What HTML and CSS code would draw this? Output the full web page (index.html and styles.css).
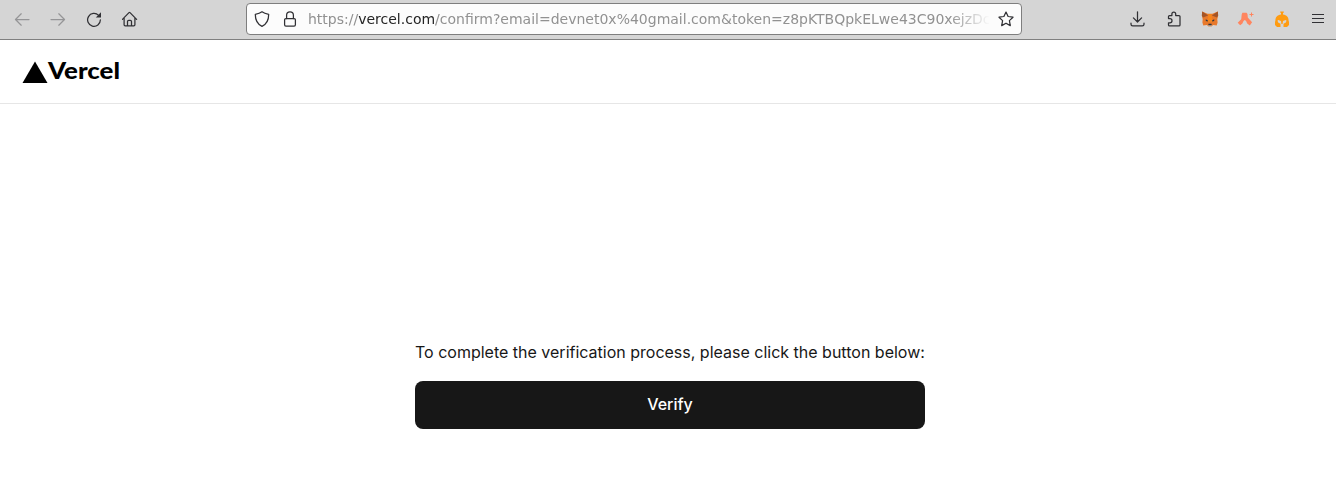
FILE: index.html
```html
<!DOCTYPE html>
<html lang="en">
<head>
<meta charset="utf-8">
<title>Verify – Vercel</title>
<link rel="stylesheet" href="styles.css">
</head>
<body>
<div class="toolbar">
  <nav class="tools">
    <span class="tool disabled"><svg class="icon" viewBox="0 0 16 16"><path d="M15 8.500H1.600M7.200 2.800L1.500 8.500l5.700 5.700"/></svg></span>
    <span class="tool disabled"><svg class="icon" viewBox="0 0 16 16"><path d="M1 8.500h13.400M8.800 2.800l5.700 5.700-5.700 5.700"/></svg></span>
    <span class="tool"><svg class="icon" viewBox="0 0 16 16"><path d="M12.600 4.400A6.400 6.400 0 1 0 14.400 8.800"/><path class="solid" d="M15 1.200v5.200H9.800z"/></svg></span>
    <span class="tool"><svg class="icon" viewBox="0.500 0 16 16"><path d="M.9 8.400L7.500 1.600q.5-.5 1 0l6.600 6.800M2.600 7v6.800q0 1.100 1.100 1.100h8.600q1.100 0 1.100-1.100V7M6 14.800v-4.300q0-1.200 1.200-1.200h1.600q1.200 0 1.200 1.200v4.300"/></svg></span>
  </nav>
  <div class="urlbar">
    <svg class="icon shield" viewBox="0 0 16 16"><path d="M8 .8C6.100 2.300 3.900 2.900 1.300 3.300C1.300 8.900 3.500 13.300 8 15.400C12.500 13.300 14.700 8.900 14.700 3.300C12.100 2.900 9.900 2.300 8 .8Z"/></svg>
    <svg class="icon lock" viewBox="0 0 16 16"><rect x="2.600" y="7.500" width="10.800" height="7.600" rx="1.300"/><path d="M4.600 7.500V4.200a3.400 3.400 0 0 1 6.800 0v3.300"/></svg>
    <div class="url">https://<span class="domain">vercel.com</span>/confirm?email=devnet0x%40gmail.com&amp;token=z8pKTBQpkELwe43C90xejzDc</div>
    <svg class="icon star" viewBox="0 0 16 16"><path d="M8 1.100l2.100 4.400 4.900.7-3.600 3.400.9 5L8 12.200l-4.300 2.400.9-5L1 6.200l4.900-.7z"/></svg>
  </div>
  <div class="tools">
    <span class="tool"><svg class="icon" viewBox="0 0 16 16"><path d="M7.500.8v10M3.400 6.900L7.500 11l4.100-4.100M1 12.200v1q0 1.700 1.700 1.700h9.600q1.700 0 1.700-1.700v-1"/></svg></span>
    <span class="tool"><svg class="icon" viewBox="0 0 16 16"><path d="M2.500 7.600V5.500q0-1 1-1h2.400V3a1.900 1.900 0 0 1 3.800 0v1.500h3.300q1 0 1 1v8.400q0 1-1 1H3.500q-1 0-1-1v-2.100h1.400a2.100 2.100 0 0 0 0-4.200z"/></svg></span>
    <span class="tool"><svg class="ext" viewBox="0 0 18 18"><path fill="#e8792b" d="M1.200 1.400l5.300 2.300h5l5.300-2.300.3 4.300-.8 3.600.3 3.200-.9 3-3.400-.5-1.900 1.500H7.600L5.700 15l-3.400.5-.9-3 .3-3.200-.8-3.600z"/><path fill="#a35528" d="M1.200 1.400l6 4.100-5.200 2L.8 5.500zM16.800 1.400l-6 4.100 5.200 2 1.200-2z"/><path fill="#f6851b" d="M7.300 4h3.400l.6 8H6.700z"/><path fill="#303740" d="M4.800 9.300l2.100 1.100-.1 1-2-.5zM13.200 9.300l-2.100 1.100.1 1 2-.5zM7.500 13.700h3l.3 1.800H7.200z"/><path fill="#cdbdb0" d="M6 15l1.400.5h3.200L12 15l-1.700 1.500H7.700z"/></svg></span>
    <span class="tool"><svg class="ext" viewBox="0 0 18 18"><path fill="#ff855f" d="M5.400 2.700h4.200l.9 1.200.3 3.600 1.800 2 2.500 2.700-2.300 3.200-2.600-1.800-1.100-2.700-1.300-.9-1.300.9-1.100 2.500-2.200 1.900-2.500-2.500 3.500-3.600.5-4.600z"/><path stroke="#ff855f" stroke-width="1" d="M14.500 2.500v4M12.500 4.500h4"/></svg></span>
    <span class="tool"><svg class="ext" viewBox="0 0 18 18"><path fill="#ff9c11" d="M7.200 1.500h3.600v1.300H10v1.600c3.800.3 5.600 3 5.600 6l.4 1.600v3L14 17h-3.500v-3.300l2.400-1.200.6-2-.9-.5-2.600 1-.4 3h-1.200l-.4-3-2.600-1-.9.5.6 2 2.400 1.200V17H4l-2-2v-3l.4-1.600c0-3 1.800-5.700 5.600-6V2.800h-.8z"/></svg></span>
    <span class="tool"><svg class="icon menu" viewBox="0 0 16 16"><path d="M2 3.500h12M2 7.500h12M2 11.500h12"/></svg></span>
  </div>
</div>
<header class="site-header">
  <svg class="logo" viewBox="0 0 100 26"><path d="M13 1.500L25.500 23H.5z"/><text class="wordmark" x="26" y="18.500" textLength="72" lengthAdjust="spacingAndGlyphs">Vercel</text></svg>
</header>
<main class="content">
  <div class="panel">
    <p class="message">To complete the verification process, please click the button below:</p>
    <button class="verify">Verify</button>
  </div>
</main>
</body>
</html>
```
FILE: styles.css
```css
* { box-sizing: border-box; }
body { margin: 0; height: 482px; overflow: hidden; background: #fff; color: #171717; font-family: Inter, sans-serif; }
.toolbar { display: flex; justify-content: space-between; height: 40px; padding: 3px 0 0 4px; background: #d5d5d5; border-bottom: 1px solid #808080; }
.tools { display: flex; height: 32px; }
.tool { display: flex; width: 36px; align-items: center; justify-content: center; }
.disabled { opacity: .38; }
.icon { display: block; flex: none; width: 16px; height: 16px; fill: none; stroke: #303034; stroke-width: 1.25; stroke-linecap: round; stroke-linejoin: round; }
.icon .solid { fill: #303034; stroke: none; }
.ext { display: block; width: 18px; height: 18px; fill: none; }
.menu { stroke-linecap: butt; stroke-width: 1.1; }
.urlbar { display: flex; align-items: center; width: 776px; height: 32px; padding: 0 7px; background: #fcfcfc; border: 1px solid #7e7e7e; border-radius: 4px; }
.lock { margin-left: 12px; }
.url { flex: none; width: 682px; margin: 0 8px 0 10px; white-space: nowrap; font: 14px/20px "DejaVu Sans", sans-serif; color: #919191; mask-image: linear-gradient(to right, #000 calc(100% - 40px), transparent); }
.domain { color: #242424; }
.site-header { display: flex; align-items: center; height: 64px; padding: 2px 0 0 22px; border-bottom: 1px solid #e6e6e6; }
.logo { display: block; width: 100px; height: 26px; overflow: visible; }
.wordmark { font: 900 22px/1 Lato, sans-serif; }
.content { display: flex; justify-content: center; padding-top: 236px; }
.panel { width: 510px; margin-left: 4px; }
.message { margin: 0; font-size: 16px; line-height: 24px; white-space: nowrap; }
.verify { display: block; width: 100%; height: 48px; margin-top: 17px; padding: 0 0 2px; border: 0; border-radius: 8px; background: #171717; color: #fff; font: 500 16px/24px Inter, sans-serif; }
```
